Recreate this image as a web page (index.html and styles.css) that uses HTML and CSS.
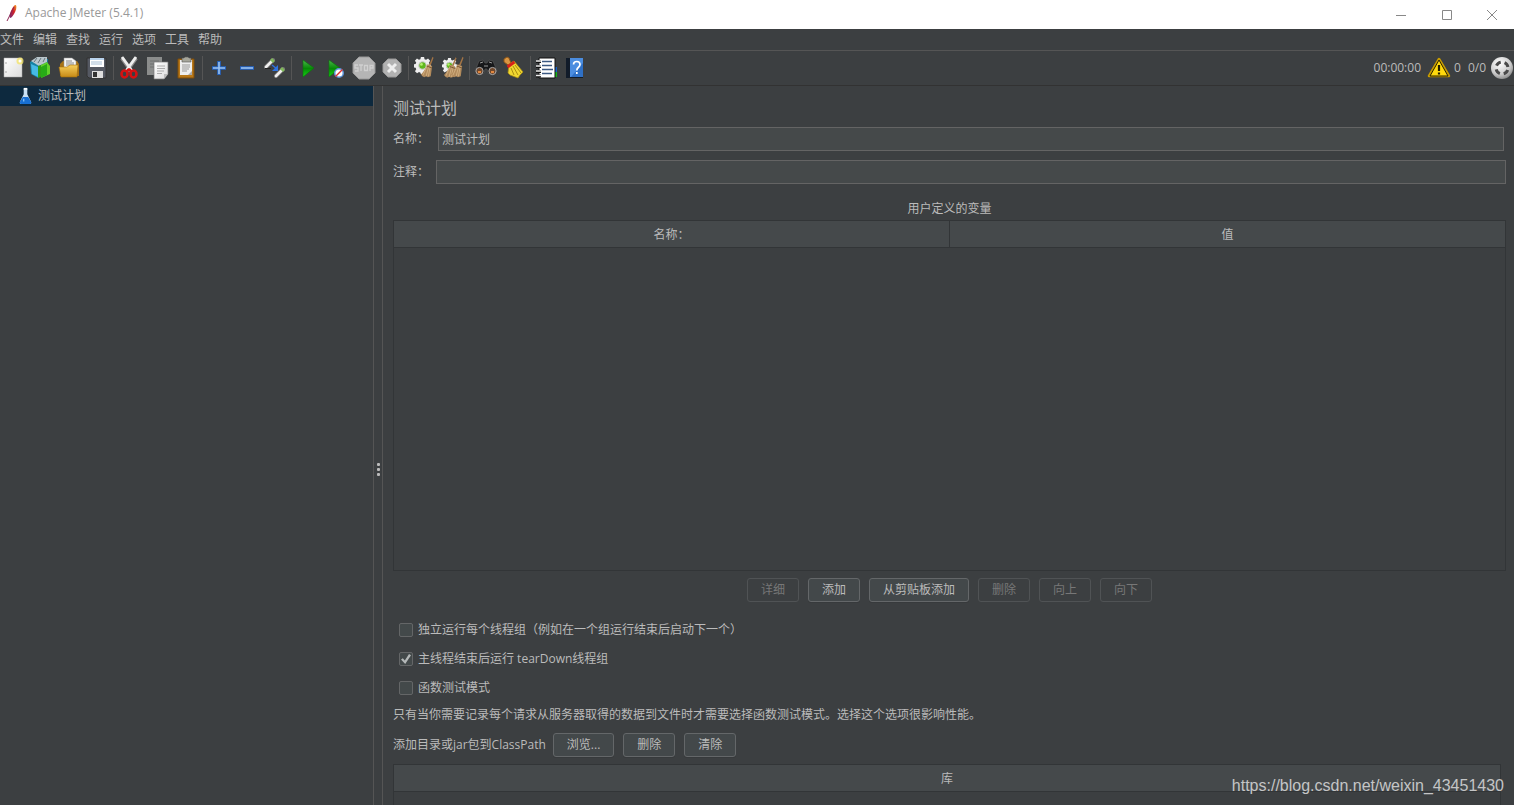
FILE: index.html
```html
<!DOCTYPE html>
<html lang="zh-CN">
<head>
<meta charset="utf-8">
<title>Apache JMeter (5.4.1)</title>
<link rel="stylesheet" href="styles.css">
</head>
<body>
<svg class="defs" width="0" height="0" aria-hidden="true">
  <defs>
    <linearGradient id="gold" x1="0" y1="0" x2="0" y2="1"><stop offset="0" stop-color="#f7cf5c"/><stop offset="1" stop-color="#c78a16"/></linearGradient>
    <linearGradient id="green" x1="0" y1="0" x2="0" y2="1"><stop offset="0" stop-color="#4bb84b"/><stop offset=".5" stop-color="#078a07"/><stop offset="1" stop-color="#13d613"/></linearGradient>
    <linearGradient id="paper" x1="0" y1="0" x2="1" y2="1"><stop offset="0" stop-color="#fff"/><stop offset="1" stop-color="#dcdcdc"/></linearGradient>
    <linearGradient id="feather" x1="1" y1="0" x2="0" y2="1"><stop offset="0" stop-color="#f59a23"/><stop offset=".45" stop-color="#d22128"/><stop offset="1" stop-color="#6d2b7d"/></linearGradient>
    <radialGradient id="ball" cx=".4" cy=".3" r=".8"><stop offset="0" stop-color="#fff"/><stop offset=".6" stop-color="#ccc"/><stop offset="1" stop-color="#777"/></radialGradient>
    <symbol id="gear" viewBox="0 0 16 16">
      <path fill="#eee" d="M6.500 0h3l.4 2 1.500.7L13.200 1.500l2 2-1.200 1.800.6 1.400 1.900.4v2.600l-2 .5-.6 1.400 1.200 1.800-2 2-1.800-1.200-1.400.6-.4 2h-3l-.4-2-1.400-.6-1.800 1.200-2-2 1.200-1.800-.6-1.400-2-.5V7l2-.4.6-1.400L.8 3.500l2-2 1.800 1.200L6 2z"/>
      <circle cx="8" cy="8" r="3.500" fill="#5fb81e" stroke="#ccc"/><circle cx="7" cy="7" r="1.300" fill="#b4ee70"/>
    </symbol>
    <symbol id="broom" viewBox="0 0 14 22">
      <path d="M12.500 0l1 1-3 8H8.500z" fill="#a57545"/>
      <path d="M7 8l5 2-1.500 11-3 1-2-1-2 1-2-1-1.500-2C3 16 5 12 7 8z" fill="#b18a5c"/>
      <path d="M7 9l-5 11M8.500 9.500L5.500 21M10 10L8 21" stroke="#d9b98a" stroke-width=".8"/><path d="M6.300 10l5.400 2" stroke="#705030"/>
    </symbol>
    <symbol id="tube" viewBox="0 0 12 12"><path d="M2 10L9 3" stroke="#777" stroke-width="4" stroke-linecap="round"/><path d="M2 10L8 4" stroke="#eee" stroke-width="2.600" stroke-linecap="round"/><path d="M7.500 4.500L9.500 2.500" stroke="#80b85a" stroke-width="4"/></symbol>
  </defs>
</svg>

<header class="titlebar">
  <svg class="logo" viewBox="0 0 12 18"><path d="M10 1c1 2 0 6-2 9-2 3-3 4-4 4-1-2 0-6 2-9 1-2 2-4 4-4z" fill="url(#feather)"/><path d="M8 3L1 17" stroke="#8d2452"/></svg>
  <h1 class="app-title">Apache JMeter (5.4.1)</h1>
  <div class="window-buttons">
    <button aria-label="最小化"><svg viewBox="0 0 12 12"><path d="M1 6.500h10"/></svg></button>
    <button aria-label="最大化"><svg viewBox="0 0 12 12"><path d="M1.500 1.500h9v9h-9z"/></svg></button>
    <button aria-label="关闭"><svg viewBox="0 0 12 12"><path d="M1 1l10 10M11 1L1 11"/></svg></button>
  </div>
</header>

<nav class="menubar">
  <button>文件</button><button>编辑</button><button>查找</button><button>运行</button><button>选项</button><button>工具</button><button>帮助</button>
</nav>

<div class="toolbar">
  <div class="tools">
    <button aria-label="新建"><svg viewBox="0 0 24 24"><path d="M3 2h18v19H3z" fill="url(#paper)" stroke="#aaa" stroke-width=".5"/><path d="M5 6v2M5 15v2" stroke="#aaa"/><circle cx="19" cy="5" r="3.500" fill="#f4e36c" opacity=".8"/><circle cx="19" cy="5" r="1.500" fill="#fff"/></svg></button>
    <button aria-label="模板"><svg viewBox="0 0 24 24"><path d="M1 6l7-4 11 1-1 12-9 7-7-4z" fill="#1683a5"/><path d="M2 5l6-4h10v5l-8 4z" fill="#b9c6cc"/><path d="M5 6l3-4M9 7l3-5M14 6l2-4" stroke="#66757d"/><path d="M2 8l7 3v10l-6-3z" fill="#46b9e5"/><path d="M9 10l9-3v11l-9 4z" fill="#2f9e16"/><path d="M12 9l6-3 3 4v8l-9 4z" fill="#62d02b"/><path d="M12 11l6-3v11l-6 3z" fill="#27ab16"/></svg></button>
    <button aria-label="打开"><svg viewBox="0 0 24 24"><path d="M3 8l3-3h14l2 3v12H3z" fill="#a87316"/><path d="M7 2h8l4 3v10H7z" fill="#f5f5f5" stroke="#999" stroke-width=".5"/><path d="M9 5h6M9 7h8M9 9h8" stroke="#888"/><path d="M2 11h8l3-2h8l-1 12H4z" fill="url(#gold)" stroke="#a56e0c" stroke-width=".6"/></svg></button>
    <button aria-label="保存"><svg viewBox="0 0 24 24"><path d="M2 2h19v20H4l-2-2z" fill="#555963" stroke="#333"/><path d="M5 2h14v9H5z" fill="#fff"/><path d="M5 2h14v2H5z" fill="#b9d3ec"/><path d="M6 6h11M6 8h11" stroke="#a5bed5"/><path d="M7 15h11v7H7z" fill="#dedede"/><path d="M8 16h4v5H8z" fill="#333"/></svg></button>
    <span class="sep"></span>
    <button aria-label="剪切"><svg viewBox="0 0 24 24"><path d="M4 2l10 14M18 2L8 16" stroke="#8b8b8b" stroke-width="4"/><path d="M4 1l10 14M18 1L8 15" stroke="#eee" stroke-width="2.800"/><ellipse cx="6.500" cy="18" rx="3" ry="3.500" fill="none" stroke="#d51212" stroke-width="2.600"/><ellipse cx="15.500" cy="18" rx="3" ry="3.500" fill="none" stroke="#d51212" stroke-width="2.600"/><path d="M9 13l2-1 2 1 1 3h-2l-1-1-1 1H8z" fill="#d51212"/></svg></button>
    <button aria-label="复制"><svg viewBox="0 0 24 24"><path d="M1 1h15v18H1z" fill="#8b8d8c"/><path d="M4 5h9M4 8h9M4 11h9" stroke="#6f7170"/><path d="M8 6h14v12l-4 5H8z" fill="url(#paper)" stroke="#777" stroke-width=".7"/><path d="M11 10h8M11 12.500h8M11 15h7M11 17.500h5" stroke="#aaa"/><path d="M22 18h-4v5z" fill="#bbb"/></svg></button>
    <button aria-label="粘贴"><svg viewBox="0 0 24 24"><path d="M4 3h16v19H4z" fill="#b97818" stroke="#7c4c0b"/><path d="M6 4h12v15H6z" fill="#eee"/><path d="M8 2h2l1-1h3l1 1h2v4H8z" fill="#a6a69b" stroke="#555" stroke-width=".6"/><path d="M8 9h8M8 11h8M8 13h7M8 15h5" stroke="#999"/><path d="M18 15v4h-4z" fill="#aaa"/></svg></button>
    <span class="sep"></span>
    <button aria-label="展开"><svg viewBox="0 0 24 24"><path d="M5 12h14M12 5v14" stroke="#2565c4" stroke-width="3.600"/><path d="M6 12h12M12 6v12" stroke="#9bc2ef" stroke-width="1.600"/></svg></button>
    <button aria-label="折叠"><svg viewBox="0 0 24 24"><path d="M5 12h14" stroke="#2565c4" stroke-width="3.600"/><path d="M6 12h12" stroke="#9bc2ef" stroke-width="1.600"/></svg></button>
    <button aria-label="切换"><svg viewBox="0 0 24 24"><use href="#tube" x="1" y="1" width="12" height="12"/><use href="#tube" x="11" y="10" width="12" height="12"/><path d="M2 12.500h6" stroke="#222"/><path d="M9 9l5 4" stroke="#2f73e0" stroke-width="1.500"/><path d="M15 9v6H9z" fill="#2f73e0"/></svg></button>
    <span class="sep"></span>
    <button aria-label="启动"><svg viewBox="0 0 24 24"><path d="M7 4l11 8-11 9z" fill="url(#green)" stroke="#087508" stroke-width=".6"/></svg></button>
    <button aria-label="不停顿启动"><svg viewBox="0 0 24 24"><path d="M5 4l11 8-11 9z" fill="url(#green)" stroke="#087508" stroke-width=".6"/><circle cx="15" cy="17" r="4.300" fill="#fff" stroke="#5c91d5" stroke-width="1.500"/><path d="M11.500 20.500l7-7" stroke="#dd3131" stroke-width="1.500"/></svg></button>
    <button aria-label="停止" disabled><svg viewBox="0 0 24 24"><path d="M7 1h10l6 6v10l-6 6H7l-6-6V7z" fill="#b5b5b5" stroke="#999"/><path d="M6 9H3v3h3v3H3M7 9h4M9 9v6M12.500 9.500h3v5h-3zM18 15V9.500h3V12h-3" fill="none" stroke="#d0d0d0" stroke-width="1.300"/></svg></button>
    <button aria-label="关闭线程" disabled><svg viewBox="0 0 24 24"><path d="M8 3h8l5 5v8l-5 5H8l-5-5V8z" fill="#b2b2b2" stroke="#999"/><path d="M8 8l8 8M16 8l-8 8" stroke="#eee" stroke-width="3"/></svg></button>
    <span class="sep"></span>
    <button aria-label="清除"><svg viewBox="0 0 24 24"><use href="#gear" x="1" y="1" width="17" height="17"/><use href="#broom" x="8" y="0" width="13" height="22"/></svg></button>
    <button aria-label="清除全部"><svg viewBox="0 0 24 24"><use href="#gear" x="1" y="1" width="15" height="17"/><use href="#broom" x="3" y="1" width="13" height="21"/><use href="#broom" x="10" y="0" width="13" height="22"/></svg></button>
    <span class="sep"></span>
    <button aria-label="搜索"><svg viewBox="0 0 24 24"><path d="M5 5l4-1 2 3h2l2-3 4 1 4 10-4 4-5-2-1-4h-2l-1 4-5 2-4-4z" fill="#17181a" stroke="#555" stroke-width=".7"/><path d="M6 7l3-1M15 6l3 1M10 10h4" stroke="#999"/><circle cx="5.500" cy="15" r="3.600" fill="#70482c" stroke="#aaa"/><circle cx="18.500" cy="15" r="3.600" fill="#70482c" stroke="#aaa"/><path d="M4 16h3M17 16h3" stroke="#e28840" stroke-width="2"/></svg></button>
    <button aria-label="重置搜索"><svg viewBox="0 0 24 24"><path d="M2 3l3-2 2 1 2 5-3 2-4-3z" fill="#d99643" stroke="#8c5619"/><path d="M7 8l5-3 9 11-3 3-2 3-8-3-2-2z" fill="#f0d730" stroke="#a98d11" stroke-width=".7"/><path d="M9 12l3 7M11 10l5 9M13 9l6 8" stroke="#a98d11"/><path d="M5.500 11l7-5" stroke="#d6221b" stroke-width="3"/></svg></button>
    <span class="sep"></span>
    <button aria-label="函数助手"><svg viewBox="0 0 24 24"><path d="M20 11h2v5h-2z" fill="#1662ca"/><path d="M20 16h2v5h-2z" fill="#16b51a"/><path d="M4 2h16v20H4z" fill="#fff" stroke="#111"/><path d="M7 5.500h10M7 9.500h10M7 13.500h11M7 17.500h10" stroke="#3c5982" stroke-width="1.500"/><path d="M1 5.500h5M1 10.500h5M1 15.500h5M1 20h5" stroke="#111" stroke-width="3"/><path d="M1 5h5M1 10h5M1 15h5M1 19.500h5" stroke="#eee" stroke-width="1.500"/></svg></button>
    <button aria-label="帮助"><svg viewBox="0 0 24 24"><path d="M3 2h17v20H3z" fill="#111b29"/><path d="M7 2h13v19H7z" fill="#4b8de0"/><path d="M20 7v14H8z" fill="#2f70c5"/><path d="M10.500 8.500C10.500 4.500 17 4.500 17 8.500c0 3-3.200 2.500-3.200 6M13.800 16v2" fill="none" stroke="#fff" stroke-width="1.700"/></svg></button>
  </div>
  <div class="status">
    <span class="clock">00:00:00</span>
    <button aria-label="日志错误"><svg viewBox="0 0 24 24"><path d="M12 3l10 17H2z" fill="#f4c60b" stroke="#c89c00" stroke-width="2.500" stroke-linejoin="round"/><path d="M12 4l9 16H3z" fill="#ffd90d" stroke="#292100" stroke-width="1"/><path d="M12 9v6M12 16.500v2" stroke="#221d00" stroke-width="2.200"/></svg></button>
    <span>0</span><span class="threads">0/0</span>
    <svg class="ball" viewBox="0 0 24 24"><circle cx="12" cy="12" r="11" fill="url(#ball)"/><circle cx="12" cy="12" r="6" fill="none" stroke="#4a4a4a" stroke-width="3" stroke-dasharray="5.400 4.025" stroke-dashoffset="-2"/></svg>
  </div>
</div>

<div class="workspace">
  <aside class="tree">
    <button class="node">
      <svg viewBox="0 0 14 20"><path d="M5 2h4v6l4 8c1 2 0 3-2 3H3c-2 0-3-1-2-3l4-8z" fill="#c8e1f5"/><path d="M4 11h6l3 5c1 2 0 3-2 3H3c-2 0-3-1-2-3z" fill="#176fd2"/><path d="M5 2h4" stroke="#fff" stroke-width="2"/><path d="M5 13v3" stroke="#7dbcf7" stroke-width="1.500"/></svg>
      <span>测试计划</span>
    </button>
  </aside>
  <div class="splitter"><i></i><i></i><i></i></div>
  <main class="panel">
    <h2 class="panel-title">测试计划</h2>
    <div class="field name-field"><label for="name">名称：</label><input id="name" type="text" value="测试计划"></div>
    <div class="field note-field"><label for="note">注释：</label><input id="note" type="text"></div>
    <h3 class="caption" id="vars">用户定义的变量</h3>
    <div class="table-box variables">
      <table aria-labelledby="vars"><thead><tr><th>名称：</th><th>值</th></tr></thead></table>
    </div>
    <div class="actions">
      <button class="btn" disabled>详细</button><button class="btn">添加</button><button class="btn">从剪贴板添加</button><button class="btn" disabled>删除</button><button class="btn" disabled>向上</button><button class="btn" disabled>向下</button>
    </div>
    <div class="options">
      <label><input type="checkbox">独立运行每个线程组（例如在一个组运行结束后启动下一个）</label>
      <label><input type="checkbox" checked>主线程结束后运行 tearDown线程组</label>
      <label><input type="checkbox">函数测试模式</label>
    </div>
    <p class="hint">只有当你需要记录每个请求从服务器取得的数据到文件时才需要选择函数测试模式。选择这个选项很影响性能。</p>
    <div class="classpath"><span>添加目录或jar包到ClassPath</span><button class="btn">浏览...</button><button class="btn">删除</button><button class="btn">清除</button></div>
    <div class="table-box library">
      <table><thead><tr><th>库</th></tr></thead></table>
    </div>
  </main>
</div>
<div class="watermark">https://blog.csdn.net/weixin_43451430</div>
</body>
</html>
```
FILE: styles.css
```css
* { box-sizing: border-box; }

body {
  margin: 0;
  height: 100vh;
  overflow: hidden;
  position: relative;
  display: flex;
  flex-direction: column;
  background: #3c3f41;
  color: #bbb;
  font: 12px/20px "Open Sans", "Noto Sans CJK SC", sans-serif;
}

button, input { font: inherit; color: inherit; }
button { padding: 0; border: 0; background: none; }
svg { display: block; }
h1, h2, h3, p { margin: 0; font-weight: 400; }
.defs { position: absolute; }

.titlebar {
  flex: none;
  height: 29px;
  display: flex;
  align-items: center;
  padding-left: 6px;
  background: #fff;
  color: #999;
}
.logo { width: 12px; height: 18px; margin: 0 7px 4px 0; }
.app-title { font-size: 12px; line-height: 26px; height: 29px; }
.window-buttons { display: flex; margin-left: auto; }
.window-buttons button { width: 46px; height: 26px; display: grid; place-items: center; }
.window-buttons button:last-child { width: 44px; }
.window-buttons svg { width: 12px; height: 12px; fill: none; stroke: #888; }

.menubar {
  flex: none;
  height: 22px;
  display: flex;
  gap: 9px;
  border-bottom: 1px solid #555;
}

.toolbar {
  flex: none;
  height: 35px;
  display: flex;
  align-items: center;
  justify-content: space-between;
  border-bottom: 1px solid #323232;
}
.tools { display: flex; align-items: center; margin-left: -1px; }
.tools button { width: 28px; height: 28px; padding: 2px; }
.tools svg, .status svg { width: 24px; height: 24px; }
.sep { width: 5px; height: 24px; display: flex; justify-content: center; }
.sep::before { content: ""; width: 1px; background: #555; }
.status { display: flex; align-items: center; }
.status button { margin: 0 3px 0 6px; }
.clock { font-size: 12px; }
.threads { margin: 0 4px 0 7px; }

.workspace { flex: 1; min-height: 0; display: flex; }
.tree { width: 373px; flex: none; }
.node {
  width: 100%;
  height: 20px;
  display: flex;
  align-items: center;
  gap: 6px;
  padding-left: 19px;
  background: #0d293e;
}
.node svg { width: 13px; height: 18px; }
.node span { line-height: 20px; }
.splitter {
  flex: none;
  width: 10px;
  border: solid #555;
  border-width: 0 1px;
  display: flex;
  flex-direction: column;
  align-items: center;
  justify-content: center;
  gap: 2px;
  padding-bottom: 0;
}
.splitter i { width: 3px; height: 3px; border-radius: 1px; background: #bbb; }
.splitter { padding-top: 48px; }

.panel {
  flex: 1;
  min-width: 0;
  display: flex;
  flex-direction: column;
  padding: 10px 8px 0 10px;
}
.panel-title { font-size: 16px; line-height: 24px; }
.field { display: flex; align-items: center; height: 24px; }
.field label { flex: none; width: 45px; }
.field input {
  flex: 1;
  min-width: 0;
  height: 24px;
  padding: 0 3px;
  border: 1px solid #646464;
  background: #45494a;
  outline: 0;
}
.name-field { margin: 7px 2px 9px 0; }
.note-field label { width: 43px; }
.caption { margin-top: 14px; font-size: 12px; line-height: 22px; text-align: center; }

.table-box { border: 1px solid #323537; min-height: 0; }
.table-box table { width: 100%; border-collapse: collapse; table-layout: fixed; }
.table-box th {
  height: 26px;
  padding: 2px 0 0;
  font-weight: 400;
  line-height: 20px;
  background: #45494b;
  border-bottom: 1px solid #323537;
}
.table-box th + th { border-left: 1px solid #323537; }
.variables { flex: 1; }
.library { flex: none; height: 41px; margin-right: 5px; border-bottom: 0; }

.actions { display: flex; justify-content: center; gap: 9px; margin: 7px 0 18px; }
.btn {
  height: 24px;
  min-width: 52px;
  padding: 0 13px;
  border: 1px solid #646769;
  border-radius: 3px;
  background: #43484a;
  box-shadow: 0 1px #373a3c;
}
.btn:disabled { background: none; border-color: #505355; color: #777; box-shadow: none; }

.options { display: flex; flex-direction: column; gap: 9px; padding-left: 6px; }
.options label { display: flex; align-items: center; gap: 5px; }
.options input {
  appearance: none;
  width: 14px;
  height: 14px;
  margin: 0;
  display: grid;
  place-items: center;
  border: 1px solid #646667;
  border-radius: 2px;
  background: #43494a;
}
.options input:checked::before {
  content: "";
  width: 10px;
  height: 10px;
  background: #b4b8b8;
  clip-path: polygon(0 55%, 18% 42%, 38% 64%, 80% 0, 100% 12%, 42% 100%);
}
.hint { margin: 7px 0 8px; }
.classpath { display: flex; align-items: center; gap: 9px; margin-bottom: 7px; }
.classpath span { margin-right: -2px; }

.watermark {
  position: absolute;
  right: 10px;
  bottom: 9px;
  font: 16px/20px "Liberation Sans", sans-serif;
  color: #c4c5c6;
}
```
